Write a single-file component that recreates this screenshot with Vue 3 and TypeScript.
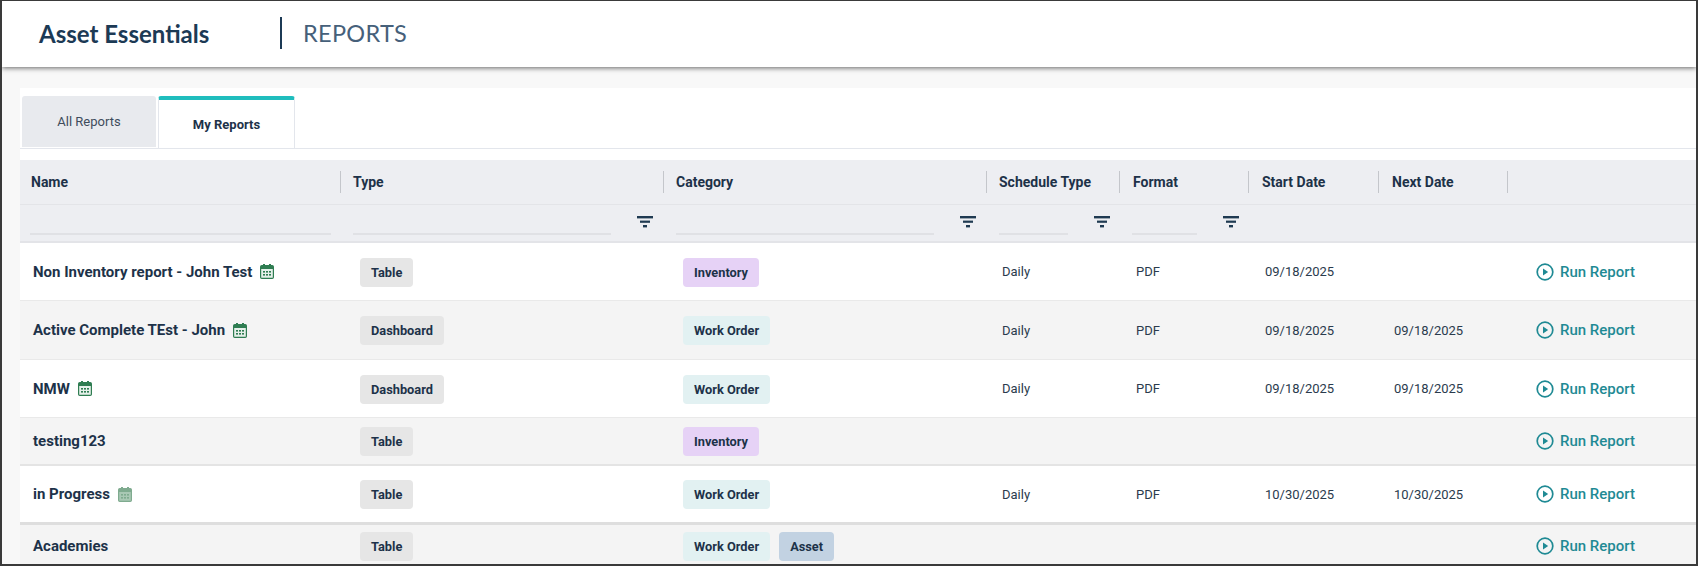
<script setup lang="ts">
interface Report {
  name: string
  scheduled?: 'on' | 'muted'
  type: string
  categories: string[]
  schedule?: string
  format?: string
  start?: string
  next?: string
  height: number
}

const filterColumns = [
  { key: 'name', filter: false },
  { key: 'type', filter: true },
  { key: 'category', filter: true },
  { key: 'schedule', filter: true },
  { key: 'format', filter: true },
]

const headers = ['Name', 'Type', 'Category', 'Schedule Type', 'Format', 'Start Date', 'Next Date', '']

const reports: Report[] = [
  { name: 'Non Inventory report - John Test', scheduled: 'on', type: 'Table', categories: ['Inventory'], schedule: 'Daily', format: 'PDF', start: '09/18/2025', height: 58 },
  { name: 'Active Complete TEst - John', scheduled: 'on', type: 'Dashboard', categories: ['Work Order'], schedule: 'Daily', format: 'PDF', start: '09/18/2025', next: '09/18/2025', height: 59 },
  { name: 'NMW', scheduled: 'on', type: 'Dashboard', categories: ['Work Order'], schedule: 'Daily', format: 'PDF', start: '09/18/2025', next: '09/18/2025', height: 58 },
  { name: 'testing123', type: 'Table', categories: ['Inventory'], height: 48 },
  { name: 'in Progress', scheduled: 'muted', type: 'Table', categories: ['Work Order'], schedule: 'Daily', format: 'PDF', start: '10/30/2025', next: '10/30/2025', height: 59 },
  { name: 'Academies', type: 'Table', categories: ['Work Order', 'Asset'], height: 42 },
]

function chipClass(category: string) {
  return 'chip--' + category.toLowerCase().replace(' ', '-')
}
</script>

<template>
  <div class="frame">
    <header class="topbar">
      <span class="brand">Asset Essentials</span>
      <span class="topbar-divider"></span>
      <span class="section">REPORTS</span>
    </header>

    <main class="panel">
      <div class="tabs">
        <div class="tab">All Reports</div>
        <div class="tab tab--active">My Reports</div>
      </div>

      <div class="table">
        <div class="row head-row">
          <div v-for="h in headers" :key="h" class="head-cell">{{ h }}</div>
        </div>

        <div class="row filter-row">
          <div v-for="col in filterColumns" :key="col.key" class="filter-cell">
            <span class="filter-line"></span>
            <svg v-if="col.filter" class="filter-icon" width="16" height="12" viewBox="0 0 16 12">
              <rect x="0" y="0" width="16" height="2.4" fill="#1f3a52" />
              <rect x="3" y="4.6" width="10" height="2.2" fill="#1f3a52" />
              <rect x="6" y="9" width="4" height="2.4" fill="#1f3a52" />
            </svg>
          </div>
        </div>

        <div
          v-for="(r, i) in reports"
          :key="r.name"
          class="row data-row"
          :class="{ 'data-row--alt': i % 2 === 1, 'data-row--heavy': i === 4, 'data-row--mid': i === 3 }"
          :style="{ height: r.height + 'px' }"
        >
          <div class="cell cell-name">
            <span>{{ r.name }}</span>
            <svg
              v-if="r.scheduled"
              class="cal"
              :class="{ 'cal--muted': r.scheduled === 'muted' }"
              width="14"
              height="15"
              viewBox="0 0 14 15"
            >
              <rect x="3" y="0" width="2" height="3" class="cal-fill" />
              <rect x="9" y="0" width="2" height="3" class="cal-fill" />
              <rect x="0.6" y="1.6" width="12.8" height="12.8" rx="1.2" class="cal-box" />
              <rect x="1" y="2" width="12" height="3" class="cal-fill" />
              <rect x="3" y="7" width="2" height="1.6" class="cal-fill" />
              <rect x="6" y="7" width="2" height="1.6" class="cal-fill" />
              <rect x="9" y="7" width="2" height="1.6" class="cal-fill" />
              <rect x="3" y="10" width="2" height="1.6" class="cal-fill" />
              <rect x="6" y="10" width="2" height="1.6" class="cal-fill" />
              <rect x="9" y="10" width="2" height="1.6" class="cal-fill" />
            </svg>
          </div>
          <div class="cell cell-chips">
            <span class="chip chip--type">{{ r.type }}</span>
          </div>
          <div class="cell cell-chips">
            <span v-for="c in r.categories" :key="c" class="chip" :class="chipClass(c)">{{ c }}</span>
          </div>
          <div class="cell cell-text">{{ r.schedule }}</div>
          <div class="cell cell-text cell-format">{{ r.format }}</div>
          <div class="cell cell-text cell-format">{{ r.start }}</div>
          <div class="cell cell-text">{{ r.next }}</div>
          <div class="cell cell-action">
            <svg width="18" height="18" viewBox="0 0 18 18">
              <circle cx="9" cy="9" r="7.8" fill="none" stroke="#1f8a94" stroke-width="1.7" />
              <path d="M7 5.6 L12.2 9 L7 12.4 Z" fill="#1f8a94" />
            </svg>
            <span class="run">Run Report</span>
          </div>
        </div>
      </div>
    </main>
  </div>
</template>

<style scoped>
.frame {
  width: 1698px;
  height: 566px;
  box-sizing: border-box;
  border: 2px solid #3a3a3a;
  border-top-width: 1px;
  background: #f8f8f8;
  overflow: hidden;
  font-family: Roboto, "Liberation Sans", sans-serif;
  color: #1d3249;
}

.topbar {
  height: 66px;
  box-sizing: border-box;
  padding: 0 0 2px 37px;
  background: #fff;
  display: flex;
  align-items: center;
  box-shadow: 0 1px 5px rgba(0, 0, 0, 0.6);
  position: relative;
}

.brand {
  width: 241px;
  font-family: Lato, sans-serif;
  font-size: 24px;
  font-weight: 700;
  color: #1c3a55;
}

.topbar-divider {
  width: 2px;
  height: 32px;
  background: #1c3a55;
}

.section {
  margin-left: 21px;
  font-family: Lato, sans-serif;
  font-size: 23.5px;
  font-weight: 400;
  color: #46607a;
  letter-spacing: 0.3px;
}

.panel {
  margin: 21px 0 0 18px;
  padding-top: 8px;
  background: #fff;
}

.tabs {
  display: flex;
  height: 52px;
  padding-left: 2px;
  gap: 2px;
  box-sizing: content-box;
  border-bottom: 1px solid #e3e6ec;
}

.tab {
  width: 134px;
  height: 51px;
  box-sizing: border-box;
  background: #e8eaee;
  border-radius: 3px 3px 0 0;
  display: flex;
  align-items: center;
  justify-content: center;
  font-size: 13px;
  color: #3f4c5c;
}

.tab--active {
  width: 137px;
  height: 52px;
  background: #fff;
  border: 1px solid #e3e6ec;
  border-top: 4px solid #1fbdbd;
  border-bottom: none;
  font-weight: 700;
  color: #1d3249;
}

.table {
  margin-top: 11px;
}

.row {
  display: grid;
  grid-template-columns: 321px 323px 323px 133px 129px 130px 129px 1fr;
}

.head-row {
  height: 45px;
  align-items: center;
  background: #edeef2;
  border-bottom: 1px solid #e3e4e8;
  box-sizing: border-box;
}

.head-cell {
  height: 22px;
  line-height: 22px;
  padding-left: 12px;
  border-right: 1px solid #c4c6cb;
  font-size: 14px;
  font-weight: 700;
  color: #1d3249;
  white-space: nowrap;
}

.head-cell:first-child {
  padding-left: 11px;
}

.head-cell:nth-child(n + 5) {
  padding-left: 13px;
}

.head-cell:last-child {
  border-right: none;
}

.filter-row {
  height: 38px;
  box-sizing: border-box;
  background: #edeef2;
  border-bottom: 2px solid #e3e4e8;
}

.filter-cell {
  display: flex;
  align-items: flex-end;
  padding: 0 11px 6px 12px;
  min-width: 0;
}

.filter-cell:first-child {
  padding-left: 10px;
  padding-right: 10px;
}

.filter-cell:nth-child(n + 4) {
  padding-right: 10px;
}

.filter-line {
  flex: 1;
  height: 2px;
  background: #e0e1e5;
}

.filter-icon {
  margin: 0 0 7px 26px;
  flex-shrink: 0;
}

.data-row {
  box-sizing: border-box;
  align-items: center;
  background: #fff;
  border-bottom: 1px solid #e9e9e9;
}

.data-row--alt {
  background: #f4f4f4;
}

.data-row--mid {
  border-bottom: 2px solid #e4e4e4;
}

.data-row--heavy {
  border-bottom: 3px solid #dedede;
}

.cell {
  min-width: 0;
  white-space: nowrap;
}

.cell-name {
  display: flex;
  align-items: center;
  gap: 8px;
  padding-left: 13px;
  font-size: 15px;
  font-weight: 700;
  color: #1d3249;
}

.cal {
  flex-shrink: 0;
}

.cal-fill {
  fill: #2f7d52;
}

.cal-box {
  fill: #e6f0ea;
  stroke: #2f7d52;
  stroke-width: 1.2;
}

.cal--muted .cal-fill {
  fill: #7fab8f;
}

.cal--muted .cal-box {
  fill: #a9c8b4;
  stroke: #7fab8f;
}

.cell-chips {
  display: flex;
  gap: 9px;
  padding: 1px 0 0 19px;
}

.chip {
  display: inline-flex;
  align-items: center;
  height: 29px;
  padding: 0 11px;
  border-radius: 4px;
  font-size: 12.8px;
  font-weight: 700;
  color: #1d3249;
}

.chip--type {
  background: #e6e6e6;
}

.chip--inventory {
  background: #e6d2f6;
}

.chip--work-order {
  background: #e2f1f2;
}

.chip--asset {
  background: #c2d2e2;
}

.cell-text {
  padding-left: 15px;
  font-size: 13px;
  color: #2a3b4d;
}

.cell-format {
  padding-left: 16px;
}

.cell-action {
  display: flex;
  align-items: center;
  gap: 6px;
  padding-left: 28px;
}

.run {
  font-size: 15px;
  font-weight: 500;
  color: #1f8a94;
}
</style>
